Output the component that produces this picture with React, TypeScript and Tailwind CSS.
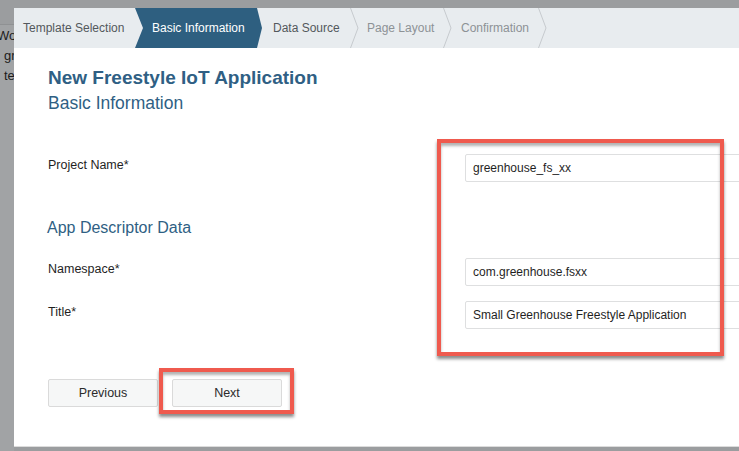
const stepSep = (
  <svg width="9" height="40" viewBox="0 0 9 40" className="shrink-0">
    <polyline points="0.5,0 8,20 0.5,40" fill="none" stroke="#c6cace" strokeWidth="1" />
  </svg>
);

function Steps() {
  return (
    <div className="flex h-[40px] items-stretch bg-[#e8ecef] text-[12px] whitespace-nowrap">
      <div className="flex w-[121px] shrink-0 items-center pl-[9px] text-[#53585c]">Template Selection</div>
      <div className="flex w-[127px] shrink-0 items-center bg-[#2e5f80] pl-[17px] text-white [clip-path:polygon(0_0,122px_0,100%_50%,122px_100%,0_100%,8px_50%)]">
        Basic Information
      </div>
      <div className="flex w-[88px] shrink-0 items-center pl-[11px] text-[#53585c]">Data Source</div>
      {stepSep}
      <div className="flex w-[84px] shrink-0 items-center pl-[8px] text-[#8d9296]">Page Layout</div>
      {stepSep}
      <div className="flex w-[86px] shrink-0 items-center pl-[9px] text-[#8d9296]">Confirmation</div>
      {stepSep}
    </div>
  );
}

function Field({ label, value, className }: { label: string; value: string; className: string }) {
  return (
    <div className={`flex ${className}`}>
      <div className="w-[417px] shrink-0 pt-[3px] text-[12.5px] leading-[16px] text-[#1f1f1f]">{label}</div>
      <div className="flex h-[28px] w-[320px] shrink-0 items-center rounded-[2px] border border-[#dedfe0] bg-white pl-[7px] text-[12px] text-[#1f1f1f]">
        {value}
      </div>
    </div>
  );
}

export default function App() {
  return (
    <div className="flex h-[451px] w-[739px] overflow-hidden bg-[#9b9d9f] font-['Liberation_Sans',Arial,sans-serif]">
      {/* page behind the dialog */}
      <div className="flex w-[14px] shrink-0 flex-col overflow-hidden whitespace-nowrap text-[13px] leading-[20px] text-[#1c1c1c]">
        <div className="h-[25px] shrink-0 border-b border-[#8f9193]" />
        <div className="-ml-[3px] bg-[#a1a3a5] pt-px">Wor</div>
        <div className="bg-[#a1a3a5] pl-[4px]">gr</div>
        <div className="flex-1 bg-[#a1a3a5] pl-[4px]">te</div>
      </div>

      <div className="relative mt-[8px] h-[438px] w-[725px] shrink-0 overflow-hidden bg-white shadow-[0_1px_0_#dcdcdc]">
        <Steps />
        <div className="pl-[34px] pt-[18px]">
          <h1 className="text-[19px] font-bold leading-[24px] text-[#2f5f84]">New Freestyle IoT Application</h1>
          <h2 className="mt-[3px] text-[17.5px] leading-[20px] text-[#2f5f84]">Basic Information</h2>
          <Field className="mt-[41px]" label="Project Name*" value="greenhouse_fs_xx" />
          <h3 className="-ml-px mt-[36px] text-[16px] leading-[20px] text-[#2f5f84]">App Descriptor Data</h3>
          <Field className="mt-[20px]" label="Namespace*" value="com.greenhouse.fsxx" />
          <Field className="mt-[15px]" label="Title*" value="Small Greenhouse Freestyle Application" />
          <div className="mt-[50px] flex gap-[14px] text-[12.5px] text-[#2a2a2a]">
            <button className="h-[28px] w-[110px] rounded-[2px] border border-[#dadada] bg-[#f6f7f7]">Previous</button>
            <button className="h-[28px] w-[110px] rounded-[2px] border border-[#dadada] bg-[#f6f7f7]">Next</button>
          </div>
        </div>

        {/* annotation boxes */}
        <div className="absolute left-[423px] top-[131px] h-[217px] w-[287px] border-[4px] border-[#ef5a4e] shadow-[0_3px_3px_rgba(0,0,0,0.45),inset_0_3px_3px_rgba(0,0,0,0.3)]" />
        <div className="absolute left-[145px] top-[360px] h-[46px] w-[135px] border-[4px] border-[#ef5a4e] shadow-[0_3px_3px_rgba(0,0,0,0.45),inset_0_3px_3px_rgba(0,0,0,0.3)]" />
      </div>
    </div>
  );
}
